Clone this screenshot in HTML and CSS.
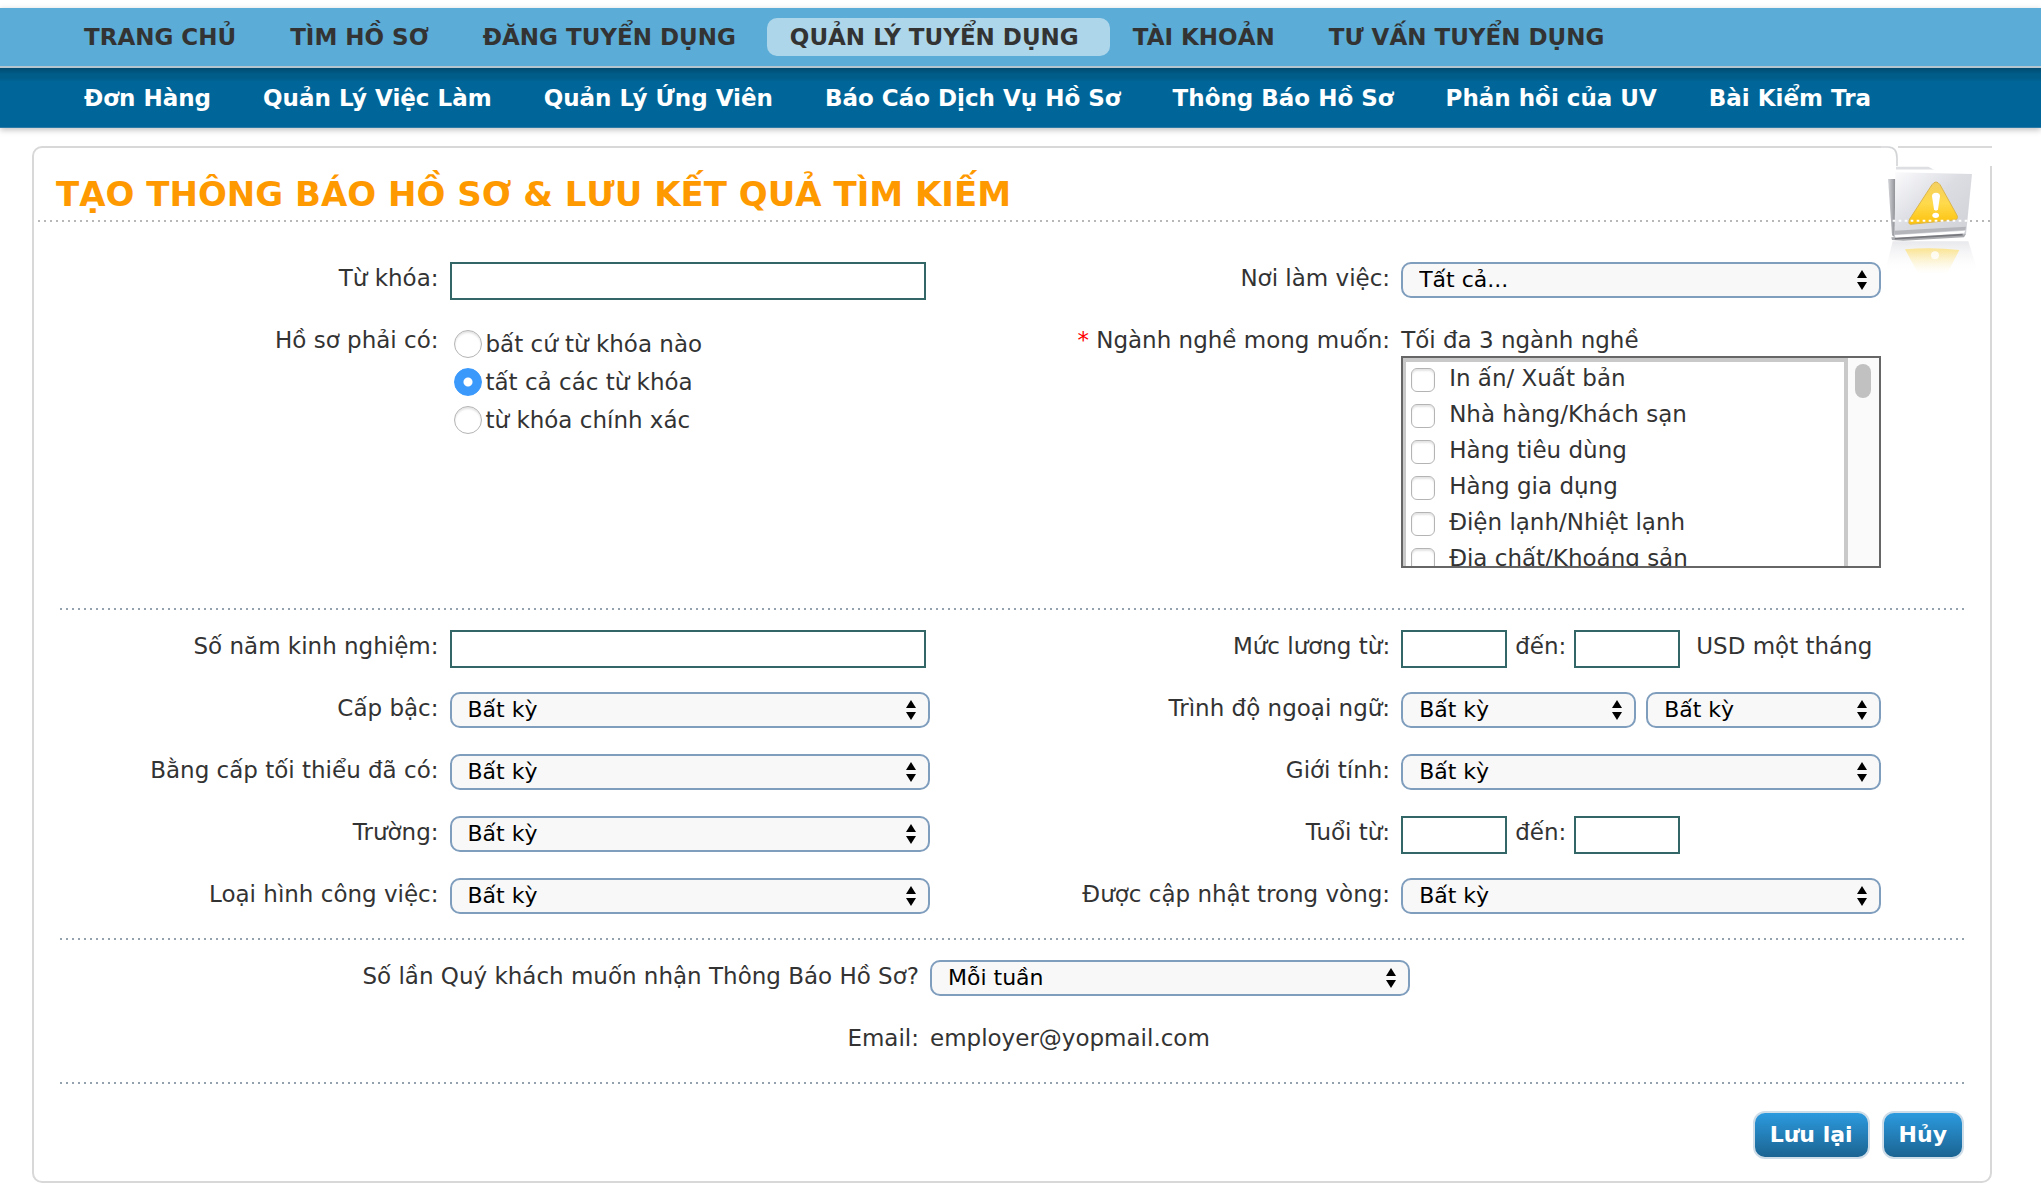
FILE: index.html
```html
<!DOCTYPE html>
<html lang="vi">
<head>
<meta charset="utf-8">
<title>Tạo thông báo hồ sơ</title>
<link rel="stylesheet" href="styles.css">
</head>
<body>
<header class="header">
  <nav class="nav nav-main">
    <a href="#">TRANG CHỦ</a>
    <a href="#">TÌM HỒ SƠ</a>
    <a href="#">ĐĂNG TUYỂN DỤNG</a>
    <a href="#" class="active">QUẢN LÝ TUYỂN DỤNG</a>
    <a href="#">TÀI KHOẢN</a>
    <a href="#">TƯ VẤN TUYỂN DỤNG</a>
  </nav>
  <nav class="nav nav-sub">
    <a href="#">Đơn Hàng</a>
    <a href="#">Quản Lý Việc Làm</a>
    <a href="#">Quản Lý Ứng Viên</a>
    <a href="#">Báo Cáo Dịch Vụ Hồ Sơ</a>
    <a href="#">Thông Báo Hồ Sơ</a>
    <a href="#">Phản hồi của UV</a>
    <a href="#">Bài Kiểm Tra</a>
  </nav>
</header>
<main class="card">
  <h1 class="title">TẠO THÔNG BÁO HỒ SƠ &amp; LƯU KẾT QUẢ TÌM KIẾM</h1>
  <svg class="badge" viewBox="0 0 450 450" aria-hidden="true">
    <defs>
      <linearGradient id="paper" x1="0" y1="0" x2="1" y2="1"><stop offset="0" stop-color="#fbfbfd"/><stop offset=".45" stop-color="#dcdde3"/><stop offset="1" stop-color="#cfd0d6"/></linearGradient>
      <linearGradient id="sun" x1="0" y1="0" x2="0" y2="1"><stop offset="0" stop-color="#f3cf62"/><stop offset=".5" stop-color="#ffda4c"/><stop offset="1" stop-color="#fdc20c"/></linearGradient>
      <linearGradient id="back" x1="0" y1="0" x2="1" y2="0"><stop offset="0" stop-color="#d5d6da"/><stop offset="1" stop-color="#8f9096"/></linearGradient>
      <linearGradient id="mirror" x1="0" y1="0" x2="0" y2="1"><stop offset="0" stop-color="#dedfe4"/><stop offset="1" stop-color="#ffffff" stop-opacity="0"/></linearGradient>
      <linearGradient id="mirrorSun" x1="0" y1="0" x2="0" y2="1"><stop offset="0" stop-color="#fbe490"/><stop offset="1" stop-color="#fff6d0" stop-opacity="0"/></linearGradient>
    </defs>
    <path d="M62 44H450V108H62Z" fill="#fff"/>
    <path d="M114 51H396" stroke="#dadada" stroke-width="6"/>
    <path d="M60 51H84Q111 51 111 84V108" fill="none" stroke="#d3d4d6" stroke-width="5"/>
    <path d="M98 334H325L355 430H74Z" fill="url(#mirror)" opacity=".7"/>
    <path d="M135 358Q215 350 298 360L262 430H174Z" fill="url(#mirrorSun)"/>
    <circle cx="225" cy="376" r="12" fill="#fff" opacity=".8"/>
    <path d="M84 147H106L104 322L96 316Z" fill="url(#back)"/>
    <path d="M94 322L318 312L312 322L130 332L96 330Z" fill="#8c8d93" opacity=".75"/>
    <path d="M108 110H205L228 122H108Z" fill="#dedfe2"/>
    <path d="M108 121H228" stroke="#fff" stroke-width="5"/>
    <path d="M106 127L336 132L318 312L104 326Z" fill="url(#paper)"/>
    <path d="M103 302L318 290L316 300L104 314Z" fill="#b4b5bb"/>
    <path d="M104 316L316 302L312 310L108 324Z" fill="#fff"/>
    <path d="M104 326L308 314" stroke="#77787e" stroke-width="5"/>
    <path d="M216 164Q228 148 240 164L291 256Q297 270 280 270L152 283Q143 283 149 267Z" fill="url(#sun)" stroke="#dcb64a" stroke-width="3"/>
    <path d="M216 199Q216 188 228 188T240 199L234 238Q228 246 222 238Z" fill="#fff"/>
    <ellipse cx="227" cy="256" rx="10" ry="8" fill="#fff"/>
    <path d="M98 272H325" stroke="#fff" stroke-width="6" stroke-dasharray="8 10"/>
  </svg>
  <form class="form">
    <section class="block first">
      <div class="column">
        <div class="row">
          <label class="label" for="keyword">Từ khóa:</label>
          <div class="field"><input class="text" id="keyword" type="text"></div>
        </div>
        <div class="row" role="radiogroup" aria-labelledby="match">
          <span class="label" id="match">Hồ sơ phải có:</span>
          <div class="field radios">
            <label><input type="radio" name="match">bất cứ từ khóa nào</label>
            <label><input type="radio" name="match" checked>tất cả các từ khóa</label>
            <label><input type="radio" name="match">từ khóa chính xác</label>
          </div>
        </div>
      </div>
      <div class="column">
        <div class="row">
          <label class="label" for="place">Nơi làm việc:</label>
          <div class="field"><select id="place"><option>Tất cả...</option></select></div>
        </div>
        <div class="row" role="group" aria-labelledby="trade">
          <span class="label" id="trade"><span class="required">*</span> Ngành nghề mong muốn:</span>
          <div class="field">
            <div class="hint">Tối đa 3 ngành nghề</div>
            <div class="picker">
              <div class="options">
                <label><input type="checkbox">In ấn/ Xuất bản</label>
                <label><input type="checkbox">Nhà hàng/Khách sạn</label>
                <label><input type="checkbox">Hàng tiêu dùng</label>
                <label><input type="checkbox">Hàng gia dụng</label>
                <label><input type="checkbox">Điện lạnh/Nhiệt lạnh</label>
                <label><input type="checkbox">Địa chất/Khoáng sản</label>
              </div>
              <div class="track"><div class="thumb"></div></div>
            </div>
          </div>
        </div>
      </div>
    </section>
    <section class="block">
      <div class="column">
        <div class="row">
          <label class="label" for="years">Số năm kinh nghiệm:</label>
          <div class="field"><input class="text" id="years" type="text"></div>
        </div>
        <div class="row">
          <label class="label" for="level">Cấp bậc:</label>
          <div class="field"><select id="level"><option>Bất kỳ</option></select></div>
        </div>
        <div class="row">
          <label class="label" for="degree">Bằng cấp tối thiểu đã có:</label>
          <div class="field"><select id="degree"><option>Bất kỳ</option></select></div>
        </div>
        <div class="row">
          <label class="label" for="school">Trường:</label>
          <div class="field"><select id="school"><option>Bất kỳ</option></select></div>
        </div>
        <div class="row">
          <label class="label" for="kind">Loại hình công việc:</label>
          <div class="field"><select id="kind"><option>Bất kỳ</option></select></div>
        </div>
      </div>
      <div class="column">
        <div class="row">
          <label class="label" for="pay-from">Mức lương từ:</label>
          <div class="field range">
            <input class="text" id="pay-from" type="text">
            <label for="pay-to">đến:</label>
            <input class="text" id="pay-to" type="text">
            <span class="unit">USD một tháng</span>
          </div>
        </div>
        <div class="row">
          <label class="label" for="language">Trình độ ngoại ngữ:</label>
          <div class="field pair">
            <select id="language"><option>Bất kỳ</option></select>
            <select aria-label="Mức độ"><option>Bất kỳ</option></select>
          </div>
        </div>
        <div class="row">
          <label class="label" for="gender">Giới tính:</label>
          <div class="field"><select id="gender"><option>Bất kỳ</option></select></div>
        </div>
        <div class="row">
          <label class="label" for="age-from">Tuổi từ:</label>
          <div class="field range">
            <input class="text" id="age-from" type="text">
            <label for="age-to">đến:</label>
            <input class="text" id="age-to" type="text">
          </div>
        </div>
        <div class="row">
          <label class="label" for="updated">Được cập nhật trong vòng:</label>
          <div class="field"><select id="updated"><option>Bất kỳ</option></select></div>
        </div>
      </div>
    </section>
    <section class="block wide">
      <div class="row">
        <label class="label" for="often">Số lần Quý khách muốn nhận Thông Báo Hồ Sơ?</label>
        <div class="field"><select id="often"><option>Mỗi tuần</option></select></div>
      </div>
      <div class="row">
        <span class="label">Email:</span>
        <div class="field">employer@yopmail.com</div>
      </div>
    </section>
    <div class="actions">
      <button type="submit">Lưu lại</button>
      <button type="button">Hủy</button>
    </div>
  </form>
</main>
</body>
</html>
```
FILE: styles.css
```css
* { box-sizing: border-box; }

body {
  margin: 0;
  padding-top: 8px;
  background: #fff;
  color: #333;
  font: 23px/32px Verdana, "DejaVu Sans", sans-serif;
}

/* navigation */
.header { box-shadow: 0 2px 6px rgba(0, 0, 0, .25); }

.nav {
  display: flex;
  align-items: flex-start;
  padding-left: 61px;
  font-weight: bold;
  white-space: nowrap;
}

.nav a {
  padding: 0 31px 0 23px;
  color: inherit;
  text-decoration: none;
}

.nav-main {
  height: 60px;
  padding-top: 10px;
  background: #5bacd6;
  border-bottom: 2px solid #b4c5cf;
}

.nav-main a { line-height: 38px; }

.nav-main .active {
  background: #add6ea;
  border-radius: 10px;
}

.nav-sub {
  height: 60px;
  padding-top: 14px;
  background: linear-gradient(#004b70, #005c89 6px, #005c89 10px, #069 14px);
  border-bottom: 1px solid #2b7ba6;
  color: #fff;
}

.nav-sub a { padding-right: 29px; }

/* panel */
.card {
  position: relative;
  margin: 18px 49px 0 32px;
  border: 2px solid #d8d8d8;
  border-radius: 10px 0 10px 10px;
}

.title {
  margin: 0 0 0 4px;
  padding: 25px 0 7px 18px;
  color: #f90;
  font-size: 34px;
  line-height: 42px;
  background: repeating-linear-gradient(90deg, #b8b8b8 0 2px, transparent 2px 6px) bottom / 100% 2px no-repeat;
}

.badge {
  position: absolute;
  top: -18px;
  right: -20px;
  width: 150px;
  height: 150px;
  pointer-events: none;
}

/* form */
.form { padding: 0 26px 22px; }

.block {
  display: grid;
  grid-template-columns: 950fr 954fr;
  padding: 20px 0 24px;
  background: repeating-linear-gradient(90deg, #94a1af 0 2px, transparent 2px 6px) bottom / 100% 2px no-repeat;
}

.block.first { padding: 40px 0 42px; }

.block.wide { grid-template-columns: 1fr; padding-bottom: 24px; }

.column, .wide {
  display: grid;
  gap: 24px 0;
  align-content: start;
}

.row {
  display: flex;
  align-items: flex-start;
  min-height: 38px;
}

.label {
  flex: 0 0 41%;
  padding-right: 11px;
  text-align: right;
  white-space: nowrap;
}

.field { flex: 0 0 480px; }

.wide .label { flex-basis: 870px; }

.required { color: #f00; }

.text {
  display: block;
  width: 476px;
  height: 38px;
  padding: 0 8px;
  border: 2px solid #366;
  background: #fff;
  font: inherit;
}

select {
  display: block;
  width: 100%;
  height: 36px;
  padding: 0 32px 0 16px;
  appearance: none;
  border: 2px solid #7f9dbd;
  border-radius: 10px;
  background: #f8f8f8 url("data:image/svg+xml,%3Csvg xmlns='http://www.w3.org/2000/svg' width='10' height='20'%3E%3Cpath d='M5 0l5 8H0zM5 20l5-8H0z'/%3E%3C/svg%3E") right 12px center no-repeat;
  color: #000;
  font: inherit;
  font-size: 22px;
}

.radios { display: grid; gap: 6px; padding-top: 4px; }

.radios label, .options label { display: flex; }

input[type="radio"] {
  width: 28px;
  height: 28px;
  margin: 2px 4px;
  appearance: none;
  border: 1px solid #b4b4b4;
  border-radius: 50%;
  background: #fff;
  box-shadow: inset 0 2px 2px #e4e4e4;
}

input[type="radio"]:checked {
  border-color: #3b99fc;
  background: radial-gradient(circle, #fff 4px, #3b99fc 5px);
  box-shadow: none;
}

.picker {
  display: flex;
  height: 212px;
  border: 2px solid #666;
}

.options {
  flex: 1;
  overflow: hidden;
  padding: 0 5px;
  border: solid #c9c9c9;
  border-width: 4px 4px 0 3px;
}

.options label { height: 36px; }

input[type="checkbox"] {
  width: 24px;
  height: 24px;
  margin: 6px 14px 6px 0;
  appearance: none;
  border: 1px solid #b4b4b4;
  border-radius: 6px;
  background: #fff;
  box-shadow: inset 0 2px 2px #e4e4e4;
}

.track {
  width: 31px;
  padding: 6px 7px;
  background: #fafafa;
}

.thumb {
  width: 16px;
  height: 34px;
  border-radius: 8px;
  background: #c1c1c1;
}

.range, .pair { display: flex; }

.range .text { width: 106px; }

.range label { padding: 0 8px; }

.unit { padding-left: 16px; white-space: nowrap; }

.pair { gap: 10px; }

.actions {
  display: flex;
  justify-content: flex-end;
  gap: 12px;
  padding: 27px 0 0;
}

.actions button {
  height: 48px;
  padding: 0 15px;
  border: 2px solid #cfdde8;
  border-radius: 12px;
  background: linear-gradient(#2c9ade, #1b6492);
  color: #fff;
  font: bold 22px/40px Verdana, "DejaVu Sans", sans-serif;
}
```
